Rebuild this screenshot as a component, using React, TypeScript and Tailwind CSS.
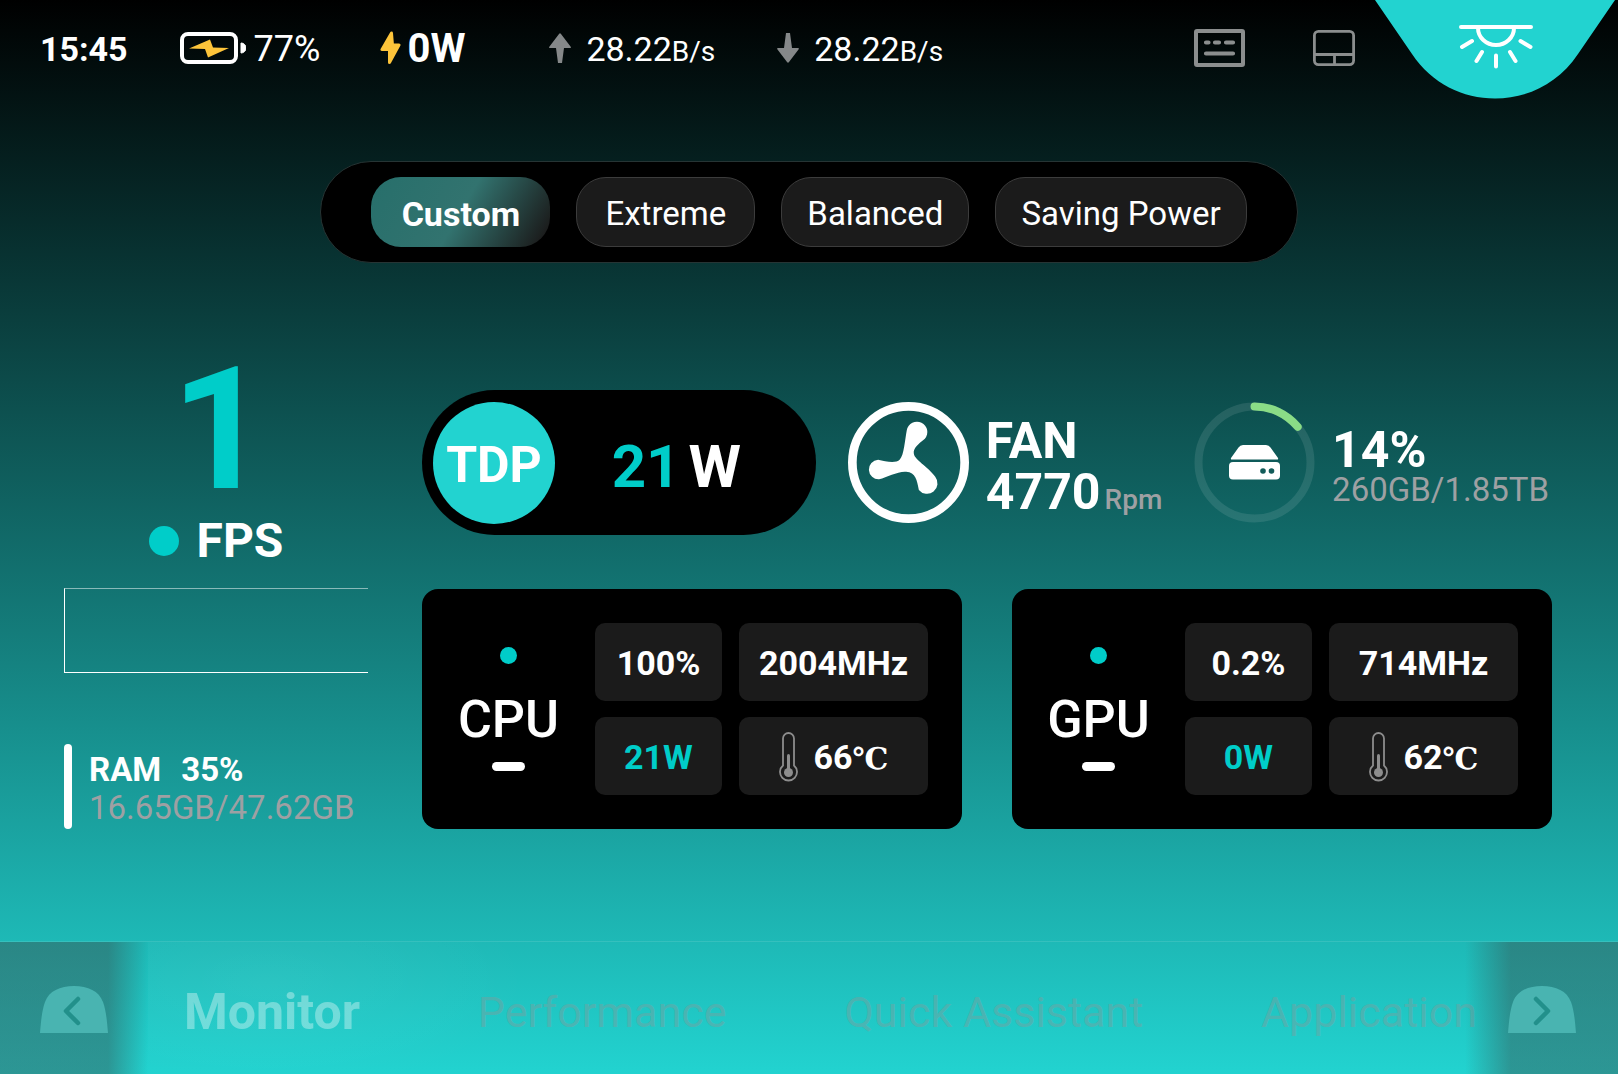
import React, { useState } from "react";

function BatteryIcon() {
  return (
    <svg width="66" height="32" viewBox="0 0 66 32" aria-hidden="true">
      <rect x="2" y="2" width="54" height="28" rx="6" fill="none" stroke="#fff" strokeWidth="4" />
      <path d="M61 11 a5 5 0 0 1 0 10z" fill="#fff" stroke="#fff" strokeWidth="1" />
      <path d="M9 16.500 L30 7.500 L33 15.500 L49 16 L28 25.500 L25 17z" fill="#fdc43a" />
    </svg>
  );
}

function BoltIcon() {
  return (
    <svg width="21" height="34" viewBox="0 0 21 34" aria-hidden="true">
      <path
        d="M11.500 2 L2 18.500 H9.500 V31.500 L19 14 H12.500z"
        fill="#fdc43a"
        stroke="#fdc43a"
        strokeWidth="3"
        strokeLinejoin="round"
      />
    </svg>
  );
}

function ArrowIcon({ down = false }: { down?: boolean }) {
  return (
    <svg width="22" height="30" viewBox="0 0 22 30" aria-hidden="true">
      <path
        d={
          down
            ? "M9 0 H13 L15 15 H21 Q22.500 15 21.500 16.500 L12 29 Q11 30.500 10 29 L0.500 16.500 Q-0.500 15 1 15 H7z"
            : "M9 30 H13 L15 15 H21 Q22.500 15 21.500 13.500 L12 1 Q11 -0.500 10 1 L0.500 13.500 Q-0.500 15 1 15 H7z"
        }
        fill="#858889"
      />
    </svg>
  );
}

function KeyboardIcon() {
  return (
    <svg width="51" height="38" viewBox="0 0 51 38" fill="none" stroke="#8b8e8e" aria-hidden="true">
      <rect x="2" y="2" width="47" height="34" rx="1" strokeWidth="4" />
      <path d="M12 13.500 H14.500 M21 13.500 H25 M32 13.500 H39 M12 24.500 H39" strokeWidth="4.200" strokeLinecap="round" />
    </svg>
  );
}

function TouchpadIcon() {
  return (
    <svg width="42" height="36" viewBox="0 0 42 36" fill="none" stroke="#8b8e8e" strokeWidth="2.800" aria-hidden="true">
      <rect x="1.400" y="1.400" width="39.200" height="33.200" rx="4" />
      <path d="M1 24.500 H41 M21.500 24.500 V35" />
    </svg>
  );
}

function LampTab() {
  return (
    <svg width="240" height="99" viewBox="0 0 240 99" aria-hidden="true">
      <path d="M0 0 L37 54 C57 84 88 98.500 120 98.500 C152 98.500 183 84 203 54 L240 0z" fill="#22d3d0" />
      <g fill="none" stroke="#fff" strokeWidth="4" strokeLinecap="round">
        <path d="M86 27 H156" />
        <path d="M103 28 A18 17 0 0 0 139 28" />
        <path d="M97 41 L87 47 M107 52 L101.500 61 M121 55.500 V66.500 M135 52 L140.500 61 M145.500 41 L155.500 47" />
      </g>
    </svg>
  );
}

function FanIcon() {
  return (
    <svg className="shrink-0" width="121" height="121" viewBox="52 66 362 362" aria-hidden="true">
      <circle cx="233" cy="247" r="168" fill="none" stroke="#fff" strokeWidth="26" />
      <path
        d="M228 150 A31 31 0 1 1 282 176 C262 192 246 205 249 221 C252 240 290 258 313 290 A31 31 0 1 1 264 329 C258 300 255 277 226 275 C200 273 170 292 145 297 A29 29 0 1 1 142 239 C165 244 195 251 207 238 C220 225 222 180 228 150z"
        fill="#fff"
      />
    </svg>
  );
}

function DiskRing({ percent }: { percent: number }) {
  return (
    <svg className="shrink-0" width="121" height="121" viewBox="0 0 121 121" aria-hidden="true">
      <circle cx="60.500" cy="60.500" r="56" fill="none" stroke="#fff" strokeOpacity="0.1" strokeWidth="8" />
      <circle
        cx="60.500"
        cy="60.500"
        r="56"
        fill="none"
        stroke="#8adc86"
        strokeWidth="8"
        strokeLinecap="round"
        pathLength={100}
        strokeDasharray={`${percent} 100`}
        transform="rotate(-90 60.500 60.500)"
      />
      <path d="M49 43 H72 Q75 43 76.500 45.500 L84 56 Q84.500 57.500 83 57.500 H38 Q36.500 57.500 37 56 L44.500 45.500 Q46 43 49 43z" fill="#fff" />
      <rect x="35" y="60" width="51" height="17.500" rx="4" fill="#fff" />
      <circle cx="69" cy="69" r="2.800" fill="#125c5a" />
      <circle cx="77.500" cy="69" r="2.800" fill="#125c5a" />
    </svg>
  );
}

function ThermometerIcon() {
  return (
    <svg width="19" height="50" viewBox="0 0 19 50" aria-hidden="true">
      <path
        d="M4 33.500 V6.500 a5.500 5.500 0 0 1 11 0 V33.500 a8.500 8.500 0 1 1 -11 0z"
        fill="none"
        stroke="#8d8d8d"
        strokeWidth="1.800"
      />
      <circle cx="9.500" cy="40.500" r="4.500" fill="#8d8d8d" />
      <path d="M9.500 40 V23.500" stroke="#8d8d8d" strokeWidth="3" strokeLinecap="round" />
    </svg>
  );
}

function NavArrow({ right = false }: { right?: boolean }) {
  return (
    <svg width="68" height="47" viewBox="0 0 68 47" aria-hidden="true">
      <path d="M0 47 C1 35 2 24 5 16 C9 5 20 0 34 0 C48 0 59 5 63 16 C66 24 67 35 68 47z" fill="#49b4b1" />
      <path
        d={right ? "M28 13 L40 25 L28 37" : "M38 13 L26 25 L38 37"}
        fill="none"
        stroke="#22908b"
        strokeWidth="4.500"
        strokeLinecap="round"
        strokeLinejoin="round"
      />
    </svg>
  );
}

function Traffic({ down = false, label }: { down?: boolean; label: string }) {
  return (
    <div className="flex items-center gap-[15px]" aria-label={label}>
      <ArrowIcon down={down} />
      <span className="pt-[2px] text-[34px]">
        28.22<span className="text-[28px]">B/s</span>
      </span>
    </div>
  );
}

const tile = "flex h-[78px] items-center justify-center rounded-[10px] bg-[#1b1b1b] pt-[2px]";

function ChipCard(props: { name: string; load: string; clock: string; power: string; temp: string }) {
  return (
    <section className="flex rounded-2xl bg-black py-[34px] pr-[34px]" aria-label={props.name}>
      <div className="flex flex-1 flex-col items-center pt-6">
        <span className="size-[17px] rounded-full bg-[#00cdc9]" />
        <h2 className="mt-[26px] text-[52px] leading-[60px] font-medium">{props.name}</h2>
        <span className="mt-3 h-[9px] w-[33px] rounded-full bg-white" />
      </div>
      <div className="grid w-[333px] grid-cols-[127fr_189fr] gap-x-[17px] gap-y-4 text-[34px] font-bold">
        <div className={tile}>{props.load}</div>
        <div className={tile}>{props.clock}</div>
        <div className={`${tile} text-[#00cdc9]`}>{props.power}</div>
        <div className={`${tile} gap-4`}>
          <ThermometerIcon />
          <span>
            {props.temp}
            <span className="font-['DejaVu_Serif',serif] text-[30px]">℃</span>
          </span>
        </div>
      </div>
    </section>
  );
}

const modes = ["Custom", "Extreme", "Balanced", "Saving Power"];

export default function App() {
  const [mode, setMode] = useState("Custom");
  return (
    <div className="flex min-h-screen flex-col overflow-x-hidden bg-[linear-gradient(to_bottom,#000000,#22d3d0)] font-['Roboto',sans-serif] text-white">
      <header className="flex h-24 items-center pr-[3px] pl-10">
        <time className="pt-[2px] text-[34px] font-bold">15:45</time>
        <div className="ml-[52px] flex items-center gap-2 text-[36px]">
          <BatteryIcon />
          <span className="pt-[2px]">77%</span>
        </div>
        <div className="ml-[60px] flex items-center gap-[6px] text-[40px] font-bold">
          <BoltIcon />
          <span className="pt-[2px]">0W</span>
        </div>
        <div className="ml-[84px] flex gap-[62px]">
          <Traffic label="Upload" />
          <Traffic down label="Download" />
        </div>
        <div className="ml-auto flex items-center self-stretch">
          <button type="button" aria-label="Keyboard" className="mr-[68px]">
            <KeyboardIcon />
          </button>
          <button type="button" aria-label="Touchpad" className="mr-5">
            <TouchpadIcon />
          </button>
          <button type="button" aria-label="Lamp" className="self-start">
            <LampTab />
          </button>
        </div>
      </header>

      <div className="mt-[65px] flex items-center gap-[26px] self-center rounded-full border border-[#263434] bg-black px-[50px] py-[15px]">
        {modes.map((m) => (
          <button
            key={m}
            type="button"
            aria-pressed={m === mode}
            onClick={() => setMode(m)}
            className={
              m === mode
                ? "h-[70px] min-w-[179px] rounded-[30px] bg-[linear-gradient(120deg,#276f6b_0%,#32736f_50%,#1b1b1b_95%)] px-6 pt-1 text-[34px] font-bold"
                : "h-[70px] min-w-[179px] rounded-[30px] border border-[#3c3c3c] bg-[#1b1b1b] px-[25px] pt-1 text-[33px]"
            }
          >
            {m}
          </button>
        ))}
      </div>

      <main className="mt-[97px] flex items-end gap-[54px] pr-[66px] pl-16">
        <div className="w-[304px] shrink-0">
          <div className="pl-2 text-center text-[170px] leading-[140px] font-bold text-[#00cdc9]">1</div>
          <div className="mt-[11px] flex items-center justify-center gap-[18px]">
            <span className="size-[30px] rounded-full bg-[#00cdc9]" />
            <span className="text-[48px] leading-[60px] font-bold">FPS</span>
          </div>
          <div className="mt-[17px] h-[85px] border-y border-l border-t-white/50 border-b-white border-l-white" />
          <div className="mt-[71px] flex h-[85px] gap-[17px]">
            <span className="w-2 rounded-full bg-white" />
            <div className="flex flex-col justify-center pt-1">
              <div className="flex gap-5 text-[33px] leading-[38px] font-bold">
                <span>RAM</span>
                <span>35%</span>
              </div>
              <div className="text-[33px] leading-[38px] text-[#9ea0a3]">16.65GB/47.62GB</div>
            </div>
          </div>
        </div>

        <div className="flex-1">
          <div className="flex items-center justify-between">
            <div className="flex h-[145px] w-[394px] items-center rounded-full bg-black pr-[75px] pl-[11px]">
              <span className="flex size-[122px] items-center justify-center rounded-full bg-[#22d3d0] pt-[6px] text-[50px] font-bold">
                TDP
              </span>
              <span className="flex flex-1 items-baseline justify-end gap-2 pt-2 text-[60px] leading-none font-bold">
                <span className="text-[#00cdc9]">21</span>W
              </span>
            </div>
            <div className="flex items-center gap-[17px]">
              <FanIcon />
              <div className="pt-4 text-[50px] leading-[51px] font-bold">
                <div>FAN</div>
                <div>
                  4770<span className="ml-1 text-[28px] font-medium text-[#9ea0a3]">Rpm</span>
                </div>
              </div>
            </div>
            <div className="flex items-center gap-[17px] pr-[3px]">
              <DiskRing percent={14} />
              <div className="pt-2">
                <div className="text-[50px] leading-[46px] font-bold">14%</div>
                <div className="text-[33px] leading-[34px] text-[#9ea0a3]">260GB/1.85TB</div>
              </div>
            </div>
          </div>
          <div className="mt-[54px] grid grid-cols-2 gap-[50px]">
            <ChipCard name="CPU" load="100%" clock="2004MHz" power="21W" temp="66" />
            <ChipCard name="GPU" load="0.2%" clock="714MHz" power="0W" temp="62" />
          </div>
        </div>
      </main>

      <nav className="mt-auto flex h-[133px] items-stretch border-t border-white/10 text-[43px] text-[#8f9696]/40">
        <div className="flex w-[148px] items-center bg-[linear-gradient(to_right,rgba(60,60,60,0.4)_73%,rgba(60,60,60,0))] pt-[2px] pl-10">
          <button type="button" aria-label="Previous">
            <NavArrow />
          </button>
        </div>
        <div className="flex flex-1 items-center justify-between bg-[radial-gradient(ellipse_260px_110px_at_120px_40px,rgba(255,255,255,0.05),transparent)] pt-2 pl-9">
          <a href="#monitor" aria-current="page" className="text-[50px] font-bold text-white/35">
            Monitor
          </a>
          <a href="#performance">Performance</a>
          <a href="#quick-assistant">Quick Assistant</a>
          <a href="#application">Application</a>
        </div>
        <div className="-ml-3 flex w-[153px] items-center justify-end bg-[linear-gradient(to_left,rgba(60,60,60,0.4)_70%,rgba(60,60,60,0))] pt-[2px] pr-[42px]">
          <button type="button" aria-label="Next">
            <NavArrow right />
          </button>
        </div>
      </nav>
    </div>
  );
}
